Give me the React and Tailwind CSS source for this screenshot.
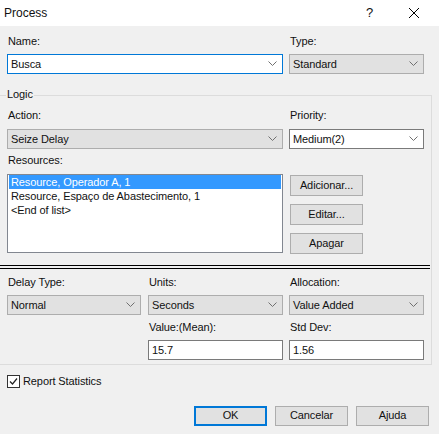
import React from 'react'

function Chevron() {
  return (
    <svg width="9" height="6" viewBox="0 0 9 6" className="shrink-0">
      <path d="M0.5 0.5 L4.5 4.5 L8.5 0.5" fill="none" stroke="#707070" strokeWidth="1" />
    </svg>
  )
}

function Combo({ value, w, variant = 'gray' }) {
  const styles = {
    gray: 'bg-[#e1e1e1] border-[#adadad]',
    white: 'bg-white border-[#7a7a7a]',
    focus: 'bg-white border-[#0078d7]',
  }
  return (
    <div className={`${w} h-[20px] border ${styles[variant]} flex items-center justify-between pl-[3px] pr-[5px]`}>
      <span>{value}</span>
      <Chevron />
    </div>
  )
}

function TextBox({ value, w }) {
  return (
    <div className={`${w} h-[20px] border border-[#7a7a7a] bg-white flex items-center pl-[3px]`}>
      {value}
    </div>
  )
}

function Button({ label, h = 'h-[21px]', primary }) {
  return (
    <div className={`w-[73px] ${h} flex items-center justify-center bg-[#e1e1e1] ${primary ? 'border-2 border-[#0078d7]' : 'border border-[#adadad]'}`}>
      {label}
    </div>
  )
}

function Label({ children, className = '' }) {
  return <div className={`h-[13px] leading-[13px] ${className}`}>{children}</div>
}

export default function App() {
  const resources = ['Resource, Operador A, 1', 'Resource, Espaço de Abastecimento, 1', '<End of list>']

  return (
    <div className="w-[439px] h-[434px] bg-[#f0f0f0] text-[11px] text-[#111] overflow-hidden tracking-[-0.1px]" style={{ fontFamily: '"Liberation Sans", Arial, sans-serif' }}>
      {/* title bar */}
      <div className="h-[26px] bg-white flex items-center pl-[4px] tracking-normal">
        <span className="text-[12px] flex-1">Process</span>
        <span className="text-[13px] w-[10px] mr-[32px]">?</span>
        <svg width="12" height="12" viewBox="0 0 12 12" className="mr-[19px]">
          <path d="M1 1 L11 11 M11 1 L1 11" stroke="#000" strokeWidth="1" />
        </svg>
      </div>

      {/* name / type */}
      <div className="flex gap-[6px] pl-[7px] pt-[9px]">
        <div className="w-[276px]">
          <Label className="pl-[1px]">Name:</Label>
          <div className="mt-[6px]"><Combo value="Busca" w="w-[276px]" variant="focus" /></div>
        </div>
        <div className="w-[135px]">
          <Label className="pl-[1px]">Type:</Label>
          <div className="mt-[6px]"><Combo value="Standard" w="w-[135px]" /></div>
        </div>
      </div>

      {/* Logic group */}
      <div className="relative mt-[21px] w-[432px] border-t border-r border-b border-[#dcdcdc] pb-[4px]">
        <span className="absolute left-[6px] top-[-8px] bg-[#f0f0f0] px-[1px] leading-[13px]">Logic</span>

        <div className="flex gap-[6px] pl-[7px] pt-[13px]">
          <div className="w-[276px]">
            <Label className="pl-[1px]">Action:</Label>
            <div className="mt-[7px]"><Combo value="Seize Delay" w="w-[276px]" /></div>
            <Label className="pl-[1px] mt-[5px]">Resources:</Label>
            <div className="mt-[7px] w-[276px] h-[79px] border border-[#828790] bg-white px-[1px]">
              {resources.map((r, i) => (
                <div key={r} className={`h-[14px] leading-[14px] pl-[2px] ${i === 0 ? 'bg-[#3399ff] text-white' : ''}`}>{r}</div>
              ))}
            </div>
          </div>
          <div className="w-[135px]">
            <Label className="pl-[1px]">Priority:</Label>
            <div className="mt-[7px]"><Combo value="Medium(2)" w="w-[135px]" variant="white" /></div>
            <div className="mt-[26px] pl-[1px] flex flex-col gap-[8px]">
              <Button label="Adicionar..." />
              <Button label="Editar..." />
              <Button label="Apagar" />
            </div>
          </div>
        </div>

        {/* double separator */}
        <div className="mt-[11px] w-[430px] h-[4px] border-t border-b border-black" />

        <div className="flex gap-[6px] pl-[7px] pt-[7px]">
          <div className="w-[134px]">
            <Label className="pl-[1px]">Delay Type:</Label>
            <div className="mt-[6px]"><Combo value="Normal" w="w-[134px]" /></div>
          </div>
          <div className="w-[135px] ml-[1px]">
            <Label className="pl-[1px]">Units:</Label>
            <div className="mt-[6px]"><Combo value="Seconds" w="w-[135px]" /></div>
            <Label className="pl-[1px] mt-[6px]">Value:(Mean):</Label>
            <div className="mt-[6px]"><TextBox value="15.7" w="w-[135px]" /></div>
          </div>
          <div className="w-[135px]">
            <Label className="pl-[1px]">Allocation:</Label>
            <div className="mt-[6px]"><Combo value="Value Added" w="w-[135px]" /></div>
            <Label className="pl-[1px] mt-[6px]">Std Dev:</Label>
            <div className="mt-[6px]"><TextBox value="1.56" w="w-[135px]" /></div>
          </div>
        </div>
      </div>

      {/* report statistics */}
      <div className="flex items-center gap-[3px] pl-[7px] mt-[8px]">
        <div className="w-[13px] h-[13px] border border-[#333] bg-white flex items-center justify-center">
          <svg width="9" height="9" viewBox="0 0 9 9">
            <path d="M1 4.5 L3.5 7 L8 1.5" fill="none" stroke="#222" strokeWidth="1.2" />
          </svg>
        </div>
        <span>Report Statistics</span>
      </div>

      {/* dialog buttons */}
      <div className="flex justify-end gap-[8px] pr-[10px] mt-[16px]">
        <Button label="OK" h="h-[20px]" primary />
        <Button label="Cancelar" h="h-[20px]" />
        <Button label="Ajuda" h="h-[20px]" />
      </div>
    </div>
  )
}
